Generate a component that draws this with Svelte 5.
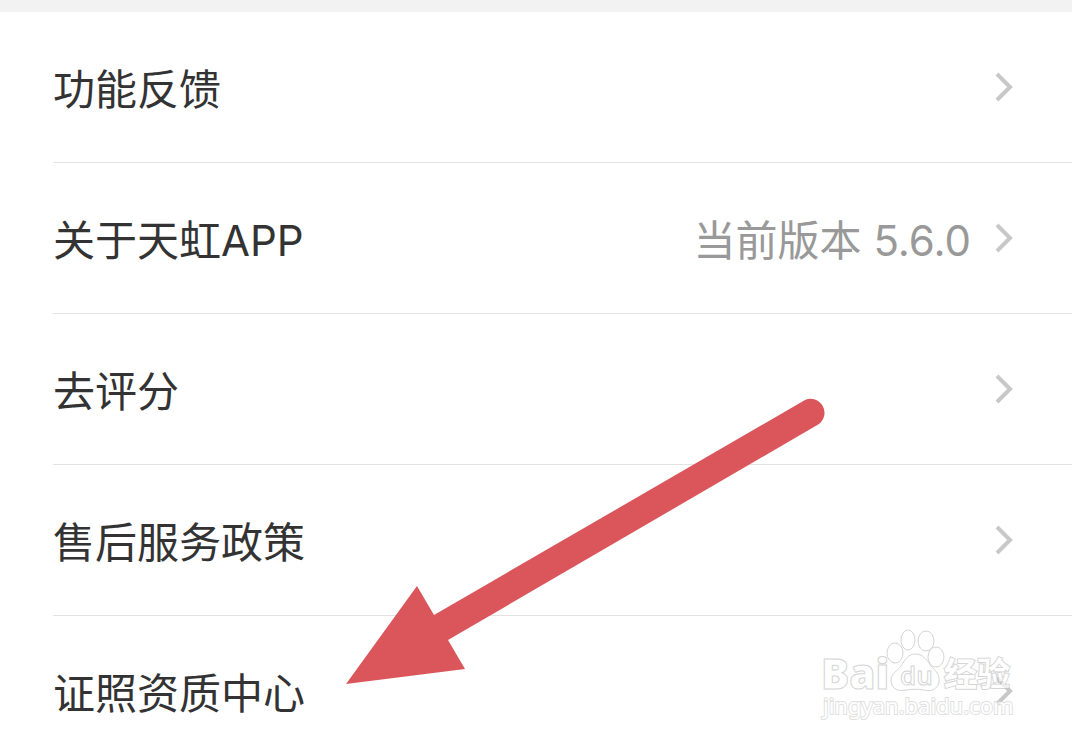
<script lang="ts">
    type Item = { title: string; detail?: string };

    const items: Item[] = [
        { title: "功能反馈" },
        { title: "关于天虹APP", detail: "当前版本 5.6.0" },
        { title: "去评分" },
        { title: "售后服务政策" },
        { title: "证照资质中心" },
    ];
</script>

<main>
    <ul>
        {#each items as item}
            <li>
                <button type="button">
                    <span class="title">{item.title}</span>
                    {#if item.detail}
                        <span class="detail">{item.detail}</span>
                    {/if}
                    <svg class="chevron" viewBox="0 0 20 32" aria-hidden="true">
                        <path d="M3 3 16 16 3 29" />
                    </svg>
                </button>
            </li>
        {/each}
    </ul>

    <svg class="arrow" viewBox="0 0 480 286" aria-hidden="true">
        <path d="M0 286 71 188 88 217 459 2A14 14 0 0 1 473 26L102 242 119 271Z" />
    </svg>

    <svg class="watermark" viewBox="0 0 200 96" role="img" aria-label="Baidu 经验">
        <text class="logo" x="1" y="61">Bai</text>
        <g class="paw">
            <ellipse cx="75" cy="25" rx="8" ry="10" />
            <ellipse cx="88" cy="12" rx="7" ry="10" />
            <ellipse cx="106" cy="13" rx="8" ry="10" />
            <ellipse cx="116" cy="29" rx="8" ry="10" />
            <path d="M95 26C103 26 107 32 111 38C116 43 120 47 119 54C118 61 111 64 104 62C98 61 92 61 86 62C77 64 71 60 71 52C71 46 77 43 81 38C85 32 88 26 95 26Z" />
        </g>
        <text class="du" x="80" y="57">du</text>
        <text class="cjk" x="124" y="58">经验</text>
        <text class="site" x="3" y="86">jingyan.baidu.com</text>
    </svg>
</main>

<style>
    :global(body) {
        margin: 0;
        background: #fff;
    }

    main {
        position: relative;
        overflow: hidden;
        border-top: 12px solid #f2f2f2;
        font-family: Inter, "Noto Sans CJK SC", sans-serif;
    }

    ul {
        margin: 0;
        padding: 0 0 0 53px;
        list-style: none;
    }

    li {
        border-bottom: 1px solid #e2e2e2;
    }

    li:last-child {
        border-bottom: none;
    }

    button {
        display: flex;
        align-items: center;
        width: 100%;
        height: 150px;
        padding: 0 58px 0 0;
        border: none;
        background: none;
        color: #333;
        font: inherit;
        font-size: 42px;
        line-height: 60px;
        text-align: left;
        cursor: pointer;
    }

    .title,
    .detail {
        padding-top: 5px;
    }

    .title {
        flex: 1;
    }

    .detail {
        color: #999;
    }

    .chevron {
        width: 20px;
        height: 32px;
        margin-left: 23px;
        fill: none;
        stroke: #c8c8c8;
        stroke-width: 4;
    }

    .arrow {
        position: absolute;
        top: 386px;
        left: 346px;
        width: 480px;
        height: 286px;
        fill: #db565b;
        pointer-events: none;
    }

    .watermark {
        position: absolute;
        right: 52px;
        top: 616px;
        width: 200px;
        height: 96px;
        opacity: 0.7;
        pointer-events: none;
    }

    .watermark text,
    .paw {
        fill: #fff;
        stroke: #c4c4c4;
        stroke-width: 1;
    }

    .watermark .logo {
        font: 800 42px "Open Sans", sans-serif;
    }

    .watermark .du {
        font: 600 26px "Open Sans", sans-serif;
    }

    .watermark .cjk {
        font: bold 33px "Noto Sans CJK SC", sans-serif;
        paint-order: stroke;
        stroke-width: 2;
    }

    .watermark .site {
        font: 22px "Noto Sans", sans-serif;
        paint-order: stroke;
        stroke: #d4d4d4;
        stroke-width: 2;
    }
</style>
